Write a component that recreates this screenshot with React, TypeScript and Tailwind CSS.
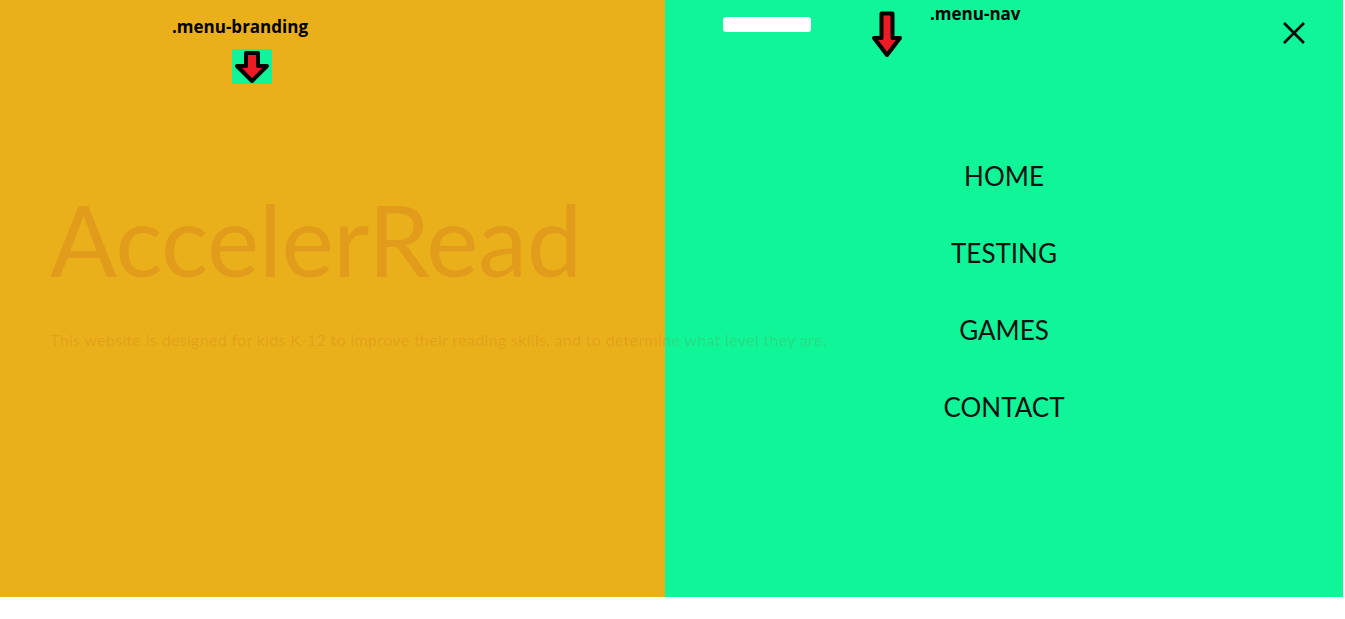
const navLinks = ['HOME', 'TESTING', 'GAMES', 'CONTACT'];

function DownArrow({ className, wide }: { className?: string; wide?: boolean }) {
  return (
    <svg viewBox={wide ? '0 0 34 32' : '0 0 30 46'} className={className}>
      <path
        d={wide ? 'M11 2 H23 V15 H32 L17 30 L2 15 H11 Z' : 'M9.5 2.5 H20.5 V27 H28 L15 44 L2 27 H9.5 Z'}
        fill="#ed1c24"
        stroke="#000"
        strokeWidth="4"
        strokeLinejoin="round"
      />
    </svg>
  );
}

export default function App() {
  return (
    <div className="w-full bg-white">
      <div className="flex h-[597px] font-['Lato',sans-serif]">
        {/* Branding side */}
        <section className="relative z-10 w-[665px] shrink-0 bg-[#eab01c]">
          <div className="flex flex-col items-center w-[480px] pt-[15px]">
            <span className="font-['Open_Sans',sans-serif] font-bold text-[17px] leading-6 text-black">
              .menu-branding
            </span>
            <div className="ml-[24px] mt-[10px] flex h-[35px] w-[40px] items-center justify-center bg-[#10f598]">
              <DownArrow wide className="h-[32px] w-[34px]" />
            </div>
          </div>

          <h1 className="mt-[105px] pl-[50px] text-[99px] leading-none tracking-[-0.5px] text-[#e29c1b]">
            AccelerRead
          </h1>
          <p className="mt-[40px] pl-[50px] whitespace-nowrap text-[16px] tracking-[0.32px] text-[rgba(180,60,0,0.15)]">
            This website is designed for kids K-12 to improve their reading skills, and to determine what level they are.
          </p>
        </section>

        {/* Nav side */}
        <section className="relative w-[678px] shrink-0 bg-[#10f598]">
          <div className="flex items-start pt-[6px]">
            <div className="ml-[58px] mt-[11px] h-[15px] w-[88px] rounded-[3px] bg-white" />
            <DownArrow className="ml-[61px] mt-[5px] h-[46px] w-[30px]" />
            <span className="ml-[28px] font-['Open_Sans',sans-serif] font-bold text-[17px] leading-4 text-black">
              .menu-nav
            </span>
          </div>
          <button className="absolute right-[38px] top-[22px] text-black">
            <svg viewBox="0 0 22 22" className="h-[22px] w-[22px]">
              <path d="M1 1 L21 21 M21 1 L1 21" stroke="currentColor" strokeWidth="2.6" />
            </svg>
          </button>

          <nav className="mt-[101px] flex flex-col items-center gap-[41px]">
            {navLinks.map((link) => (
              <a key={link} href="#" className="text-[26px] leading-9 text-[#111]">
                {link}
              </a>
            ))}
          </nav>
        </section>
      </div>
    </div>
  );
}
